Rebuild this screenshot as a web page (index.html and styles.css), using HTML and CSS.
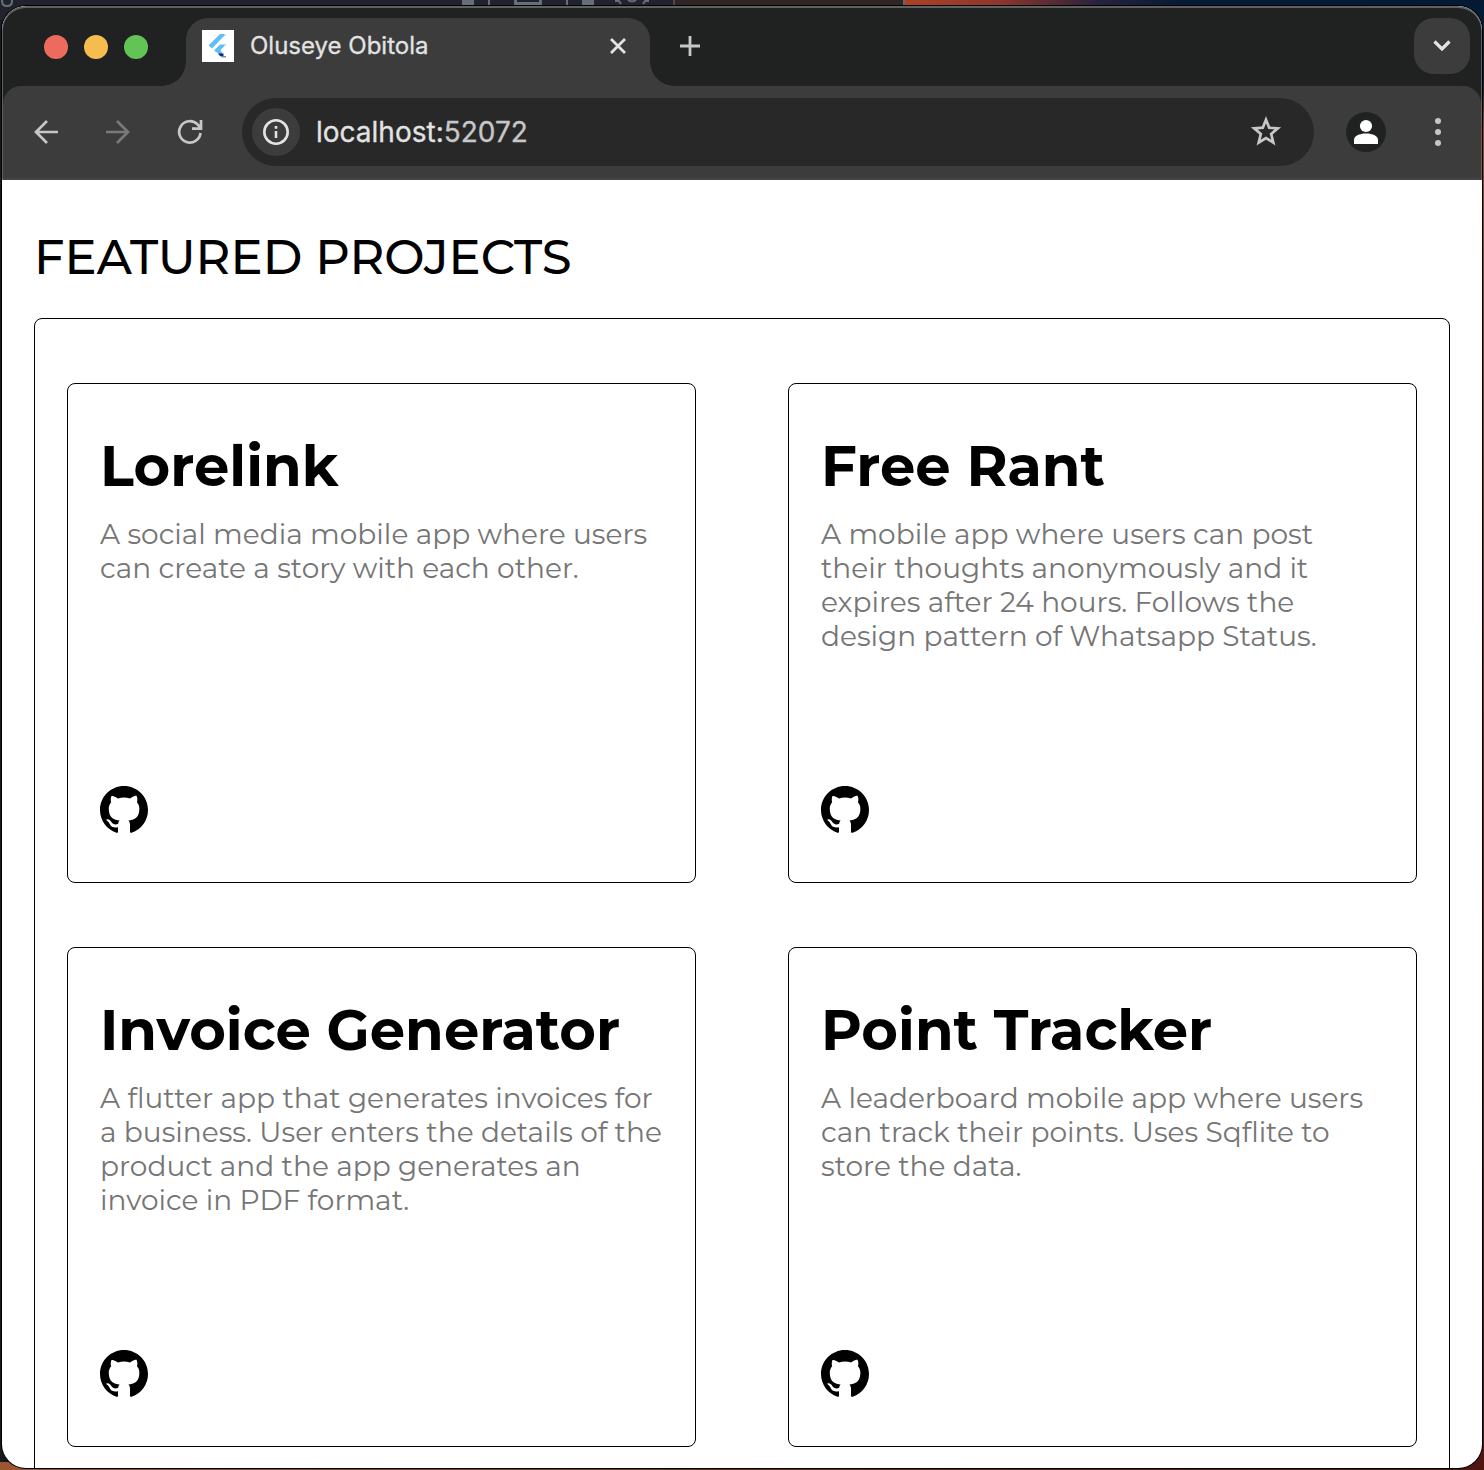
FILE: index.html
```html
<!DOCTYPE html>
<html lang="en">
<head>
<meta charset="utf-8">
<title>Oluseye Obitola</title>
<link rel="stylesheet" href="styles.css">
</head>
<body>
<svg class="desktop-bits" width="300" height="6" viewBox="440 0 300 6" fill="#686d7b">
  <path d="M462 0h12v5h-12zM488 0h2v5h-2zM514 0h28v5h-28zM566 0h2v5h-2zM582 0h12v5h-12z"/>
  <path d="M517 0h22v2h-22z" fill="#20232b"/>
  <path d="M615 1h4l2 3M649 1h-4l-2 3M628 0q4 3 8 0" fill="none" stroke="#686d7b" stroke-width="2"/>
</svg>
<svg class="desktop-letter" width="16" height="7"><path d="M2 0v1q0 5 5 5t5-5V0" fill="none" stroke="#686d7b" stroke-width="2"/></svg>
<main class="window">
  <header class="chrome">
    <div class="tabstrip">
      <div class="lights"><i class="light red"></i><i class="light amber"></i><i class="light green"></i></div>
      <div class="tab">
        <svg class="favicon" width="32" height="32" viewBox="0 0 32 32">
          <path fill="#fff" d="M0 0h32v32H0z"/>
          <path fill="#61bdf5" d="M18 4h6L10 18.500 6.500 15.500z"/>
          <path fill="#61bdf5" d="M18 14.500h6L18.500 20l2.500 4h-4l-5-3.500z"/>
          <path fill="#b5defa" d="M22 4h2v2h-2zM22 14h2v2h-2z"/>
          <path fill="#0d2c87" d="M16 23.500h5.500v2.500H18z"/><path fill="#7e8bb9" d="M18 26h6v1.500h-4z"/>
        </svg>
        <span class="tab-title">Oluseye Obitola</span>
        <svg class="close" width="16" height="16" viewBox="0 0 16 16"><path d="M1 1l14 14M15 1L1 15" stroke="#e3e3e3" stroke-width="2.8"/></svg>
      </div>
      <svg class="plus" width="20" height="20" viewBox="0 0 20 20"><path d="M10 0v20M0 10h20" stroke="#c7c7c7" stroke-width="2.8"/></svg>
      <div class="tab-search"><svg width="18" height="12" viewBox="0 0 18 12"><path d="M1.5 1.5L9 9l7.500-7.500" fill="none" stroke="#e3e3e3" stroke-width="3.200"/></svg></div>
    </div>
    <div class="toolbar">
      <svg class="nav" width="24" height="24" viewBox="0 0 24 24" fill="none" stroke="#c7c7c7" stroke-width="2.700"><path d="M24 12H2M13 1L2 12l11 11"/></svg>
      <svg class="nav forward" width="24" height="24" viewBox="0 0 24 24" fill="none" stroke="#7a7a7a" stroke-width="2.700"><path d="M0 12h22M11 1l11 11-11 11"/></svg>
      <svg class="nav reload" width="26" height="26" viewBox="0 0 26 26" fill="none" stroke="#c7c7c7" stroke-width="2.700"><path d="M23.500 14A10.700 10.700 0 1 1 20.500 5.400L23.500 8.500M24 1v8.700H15"/></svg>
      <div class="omnibox">
        <div class="info"><svg width="26" height="26" viewBox="0 0 26 26"><circle cx="13" cy="13" r="11.700" fill="none" stroke="#e3e3e3" stroke-width="2.600"/><path d="M11.700 12h2.600v7h-2.600zM11.700 7h2.600v2.700h-2.600z" fill="#e3e3e3"/></svg></div>
        <span class="url">localhost:<span class="port">52072</span></span>
        <svg class="star" width="32" height="32" viewBox="0 0 32 32"><path d="M16 3.700l3.200 8 8.600.7-6.600 5.600 2.100 8.500L16 22l-7.300 4.500 2.100-8.500-6.600-5.600 8.600-.7z" fill="none" stroke="#c7c7c7" stroke-width="2.700"/></svg>
      </div>
      <svg class="avatar" width="40" height="40" viewBox="0 0 40 40"><circle cx="20" cy="20" r="20" fill="#202221"/><circle cx="20" cy="14" r="6.100" fill="#fff"/><path d="M8 32v-4c0-4 5-6.500 12-6.500s12 2.500 12 6.500v4z" fill="#fff"/></svg>
      <svg class="menu" width="6" height="28" viewBox="0 0 6 28" fill="#c7c7c7"><circle cx="3" cy="3" r="3"/><circle cx="3" cy="14" r="3"/><circle cx="3" cy="25" r="3"/></svg>
    </div>
  </header>
  <section class="page">
    <h1>FEATURED PROJECTS</h1>
    <div class="projects">
      <article class="card">
        <h2>Lorelink</h2>
        <p>A social media mobile app where users<br>can create a story with each other.</p>
        <svg class="github" viewBox="0 0 16 16"><use href="#octocat"/></svg>
      </article>
      <article class="card">
        <h2>Free Rant</h2>
        <p>A mobile app where users can post<br>their thoughts anonymously and it<br>expires after 24 hours. Follows the<br>design pattern of Whatsapp Status.</p>
        <svg class="github" viewBox="0 0 16 16"><use href="#octocat"/></svg>
      </article>
      <article class="card">
        <h2>Invoice Generator</h2>
        <p>A flutter app that generates invoices for<br>a business. User enters the details of the<br>product and the app generates an<br>invoice in PDF format.</p>
        <svg class="github" viewBox="0 0 16 16"><use href="#octocat"/></svg>
      </article>
      <article class="card">
        <h2>Point Tracker</h2>
        <p>A leaderboard mobile app where users<br>can track their points. Uses Sqflite to<br>store the data.</p>
        <svg class="github" viewBox="0 0 16 16"><use href="#octocat"/></svg>
      </article>
    </div>
  </section>
</main>
<svg class="defs" width="0" height="0"><symbol id="octocat" viewBox="0 0 16 16"><path d="M8 0C3.580 0 0 3.580 0 8c0 3.540 2.290 6.530 5.470 7.590.4.070.550-.170.550-.380 0-.190-.010-.820-.010-1.490-2.010.370-2.530-.490-2.690-.940-.090-.230-.480-.940-.820-1.130-.280-.150-.680-.520-.010-.530.630-.010 1.080.580 1.230.820.720 1.210 1.870.870 2.330.660.070-.520.280-.870.510-1.070-1.780-.2-3.640-.890-3.640-3.950 0-.870.310-1.590.820-2.150-.080-.2-.360-1.020.080-2.120 0 0 .670-.210 2.200.820.640-.180 1.320-.270 2-.270.680 0 1.360.090 2 .270 1.530-1.040 2.200-.820 2.200-.820.440 1.100.160 1.920.080 2.120.510.560.820 1.270.820 2.150 0 3.070-1.870 3.750-3.650 3.950.290.250.540.730.540 1.480 0 1.070-.010 1.930-.010 2.200 0 .210.150.460.550.380A8.013 8.013 0 0 0 16 8c0-4.420-3.580-8-8-8z"/></symbol></svg>
</body>
</html>
```
FILE: styles.css
```css
* { box-sizing: border-box; }
body {
  margin: 0;
  height: 1470px;
  padding: 6px 2px 2px;
  overflow: hidden;
  font-family: Montserrat, Inter, "Liberation Sans", sans-serif;
  background:
    linear-gradient(90deg, #20232b 673px, #4b4b4b 673px 675px, #2f2525 675px 903px, #666 903px 905px, #ad4024 905px, #8e352d 1000px, #25223d 1100px, #071b37 1180px, #041a34) 0 0 / 100% 20px no-repeat,
    linear-gradient(90deg, #9b5632, #68301b 50%, #4f1511) 0 1462px / 100% 8px no-repeat,
    linear-gradient(#071b37 80px, #9b432e 130px, #631e18 900px, #4f1511) 1474px 0 / 10px 100% no-repeat,
    #17191f;
}
.desktop-bits { position: absolute; left: 440px; top: 0; }
.desktop-letter { position: absolute; left: 0; top: 0; }
.defs { position: absolute; }
.window {
  position: relative;
  height: 1462px;
  border-radius: 24px;
  overflow: hidden;
  background: #fff;
  box-shadow: 0 0 0 1px #000;
}
.chrome {
  height: 174px;
  background: #202221;
  border: solid #616161;
  border-width: 2px 1px 0;
  border-radius: 24px 24px 0 0;
}
.tabstrip { display: flex; height: 78px; padding: 10px 11px 0 41px; }
.lights { display: flex; gap: 16px; margin: 17px 38px 0 0; }
.light { width: 24px; height: 24px; border-radius: 50%; }
.red { background: #ed6a5e; }
.amber { background: #f5bd4f; }
.green { background: #61c454; }
.tab {
  position: relative;
  display: flex;
  width: 464px;
  height: 68px;
  padding: 12px 24px 0 16px;
  background: #3c3c3c;
  border-radius: 22px 22px 0 0;
}
.tab::before, .tab::after {
  content: "";
  position: absolute;
  bottom: 0;
  width: 24px;
  height: 24px;
}
.tab::before { left: -24px; background: radial-gradient(circle at 0 0, transparent 23.5px, #3c3c3c 24px); }
.tab::after { right: -24px; background: radial-gradient(circle at 100% 0, transparent 23.5px, #3c3c3c 24px); }
.tab-title {
  margin-left: 16px;
  font: 24px/32px Inter, sans-serif;
  color: #e3e3e3;
  white-space: nowrap;
  -webkit-text-stroke: 0.3px;
}
.close { margin: 8px 0 0 auto; }
.plus { margin: 18px 0 0 30px; }
.tab-search {
  display: flex;
  align-items: center;
  justify-content: center;
  width: 56px;
  height: 56px;
  margin-left: auto;
  border-radius: 20px;
  background: #3c3c3c;
}
.toolbar {
  display: flex;
  align-items: center;
  height: 94px;
  padding: 0 40px 0 31px;
  background: #3c3c3c;
  border-bottom: 2px solid #454345;
  border-radius: 18px 18px 0 0;
}
.nav { margin-right: 48px; }
.forward { margin-right: 47px; }
.reload { margin-right: 39px; }
.omnibox {
  display: flex;
  align-items: center;
  width: 1072px;
  height: 68px;
  padding: 0 32px 0 10px;
  border-radius: 34px;
  background: #282828;
}
.info {
  display: flex;
  align-items: center;
  justify-content: center;
  width: 48px;
  height: 48px;
  border-radius: 50%;
  background: #3c3c3c;
}
.url {
  margin-left: 16px;
  font: 28px/34px Inter, sans-serif;
  color: #e3e3e3;
  -webkit-text-stroke: 0.3px;
}
.port { color: #c7c7c7; }
.star { margin-left: auto; }
.avatar { margin-left: 32px; }
.menu { margin-left: auto; }
.page { padding: 48px 32px 0; color: #000; }
h1 { margin: 0; height: 90px; font-weight: 500; font-size: 48px; line-height: 58px; }
.projects {
  display: grid;
  grid-template-columns: 629px 629px;
  grid-auto-rows: 500px;
  gap: 64px 92px;
  padding: 64px 32px;
  border: 1px solid #000;
  border-radius: 8px;
}
.card {
  display: flex;
  flex-direction: column;
  padding: 48px 32px;
  border: 1px solid #000;
  border-radius: 8px;
}
h2 { margin: 0; font-weight: 700; font-size: 56px; line-height: 68px; }
p { margin: 17px 0 0; font-weight: 400; font-size: 28px; line-height: 34px; color: #757575; white-space: nowrap; }
.github { width: 48px; height: 48px; margin-top: auto; }
```
